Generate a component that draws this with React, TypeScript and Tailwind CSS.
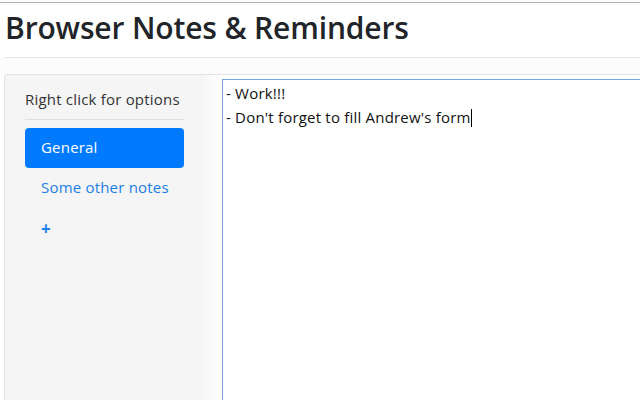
import React from "react";

export default function App() {
  const notes = [
    { name: "General", active: true },
    { name: "Some other notes", active: false },
  ];

  return (
    <div className="w-[640px] h-[400px] overflow-hidden bg-white text-[#212529]" style={{ fontFamily: '"Open Sans", "Noto Sans", sans-serif' }}>
      <div className="h-[2px]" />
      <div className="h-px bg-[#b4b4b4]" />
      <h1 className="pl-[5px] pt-[3px] h-[54px] text-[30px] font-semibold tracking-[-0.15px] leading-[44px] text-[#212529]">
        Browser Notes &amp; Reminders
      </h1>
      <div className="ml-[4px] border-t border-[#e6e6e6]" />
      <div className="h-[16px] bg-[#fcfcfc]" />
      <div className="ml-[4px] flex h-[400px] border-t border-l border-[#e2e2e2] rounded-tl-[3px]">
        <div className="w-[199px] shrink-0 bg-[#f5f5f5] px-[20px] pt-[13px] tracking-[0.2px]">
          <div className="pb-[9px] border-b border-[#dedede] text-[15px] leading-[22px] text-[#333] whitespace-nowrap">
            Right click for options
          </div>
          <div className="mt-[8px] flex flex-col">
            {notes.map((n) => (
              <div
                key={n.name}
                className={
                  n.active
                    ? "h-[40px] flex items-center px-[16px] pb-[2px] rounded-[4px] bg-[#007bff] text-white text-[15px] whitespace-nowrap"
                    : "h-[40px] flex items-center px-[16px] pb-[2px] text-[#1a7fe8] text-[15px] whitespace-nowrap"
                }
              >
                {n.name}
              </div>
            ))}
            <div className="h-[42px] flex items-center px-[16px] text-[#1a7fe8] text-[17px] font-bold">+</div>
          </div>
        </div>
        <div className="w-[18px] shrink-0 bg-gradient-to-r from-[#f7f7f7] to-white" />
        <div className="flex-1 pt-[4px]">
          <div className="h-[400px] w-[500px] border-t border-l border-[#7aa7e3] px-[3px] pt-[1px] text-[15px] leading-[24px] tracking-[0.2px] text-[#111]">
            <div>- Work!!!</div>
            <div>
              - Don't forget to fill Andrew's form
              <span className="inline-block w-px h-[18px] bg-black align-[-4px]" />
            </div>
          </div>
        </div>
      </div>
    </div>
  );
}
